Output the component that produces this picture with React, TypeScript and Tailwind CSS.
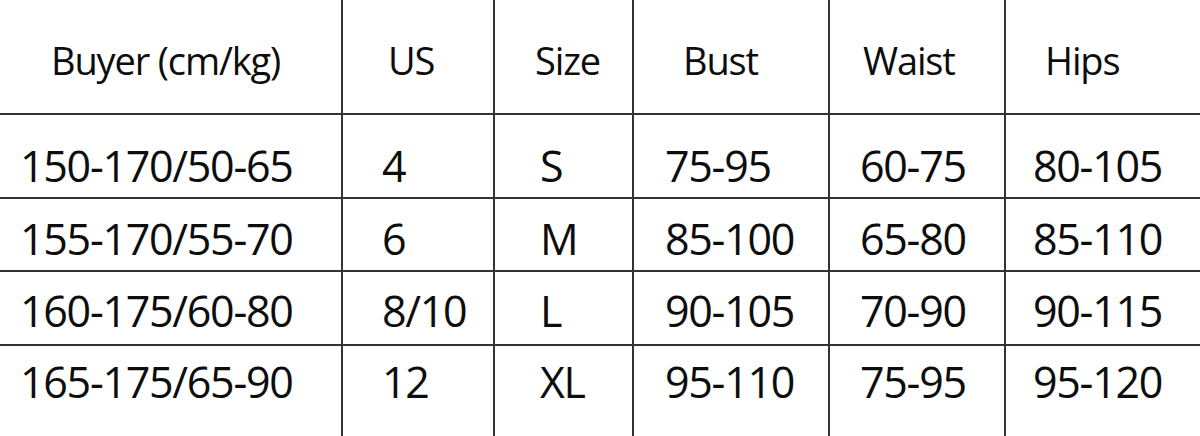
const header = ["Buyer (cm/kg)", "US", "Size", "Bust", "Waist", "Hips"];

const rows = [
  ["150-170/50-65", "4", "S", "75-95", "60-75", "80-105"],
  ["155-170/55-70", "6", "M", "85-100", "65-80", "85-110"],
  ["160-175/60-80", "8/10", "L", "90-105", "70-90", "90-115"],
  ["165-175/65-90", "12", "XL", "95-110", "75-95", "95-120"],
];

// left offsets of text inside each column
const headPad = ["pl-[51px]", "pl-[45px]", "pl-[40px]", "pl-[49px]", "pl-[33px]", "pl-[39px]"];
const cellPad = ["pl-[20px]", "pl-[39px]", "pl-[45px]", "pl-[31px]", "pl-[30px]", "pl-[27px]"];

const rowH = ["h-[84px]", "h-[73px]", "h-[74px]", "h-[90px]"];
const rowPt = ["pt-[29px]", "pt-[18px]", "pt-[17px]", "pt-[14px]"];

const grid = "grid grid-cols-[343px_152px_139px_196px_176px_194px] border-[#333]";

export default function App() {
  return (
    <div
      className="h-[436px] w-[1200px] overflow-hidden bg-white text-[#0d0d0d]"
      style={{ fontFamily: '"Open Sans", "Noto Sans", sans-serif' }}
    >
      <div className={`${grid} h-[115px] border-b-2`}>
        {header.map((h, i) => (
          <div
            key={h}
            className={`border-[#333] pt-[41px] text-[38px] leading-none tracking-[-0.03em] ${headPad[i]} ${
              i < 5 ? "border-r-2" : ""
            }`}
          >
            {h}
          </div>
        ))}
      </div>
      {rows.map((r, ri) => (
        <div key={r[0]} className={`${grid} ${rowH[ri]} ${ri < 3 ? "border-b-2" : ""}`}>
          {r.map((c, i) => (
            <div
              key={i}
              className={`border-[#333] text-[43px] leading-none tracking-[-0.03em] ${cellPad[i]} ${rowPt[ri]} ${
                i < 5 ? "border-r-2" : ""
              }`}
            >
              {c}
            </div>
          ))}
        </div>
      ))}
    </div>
  );
}
